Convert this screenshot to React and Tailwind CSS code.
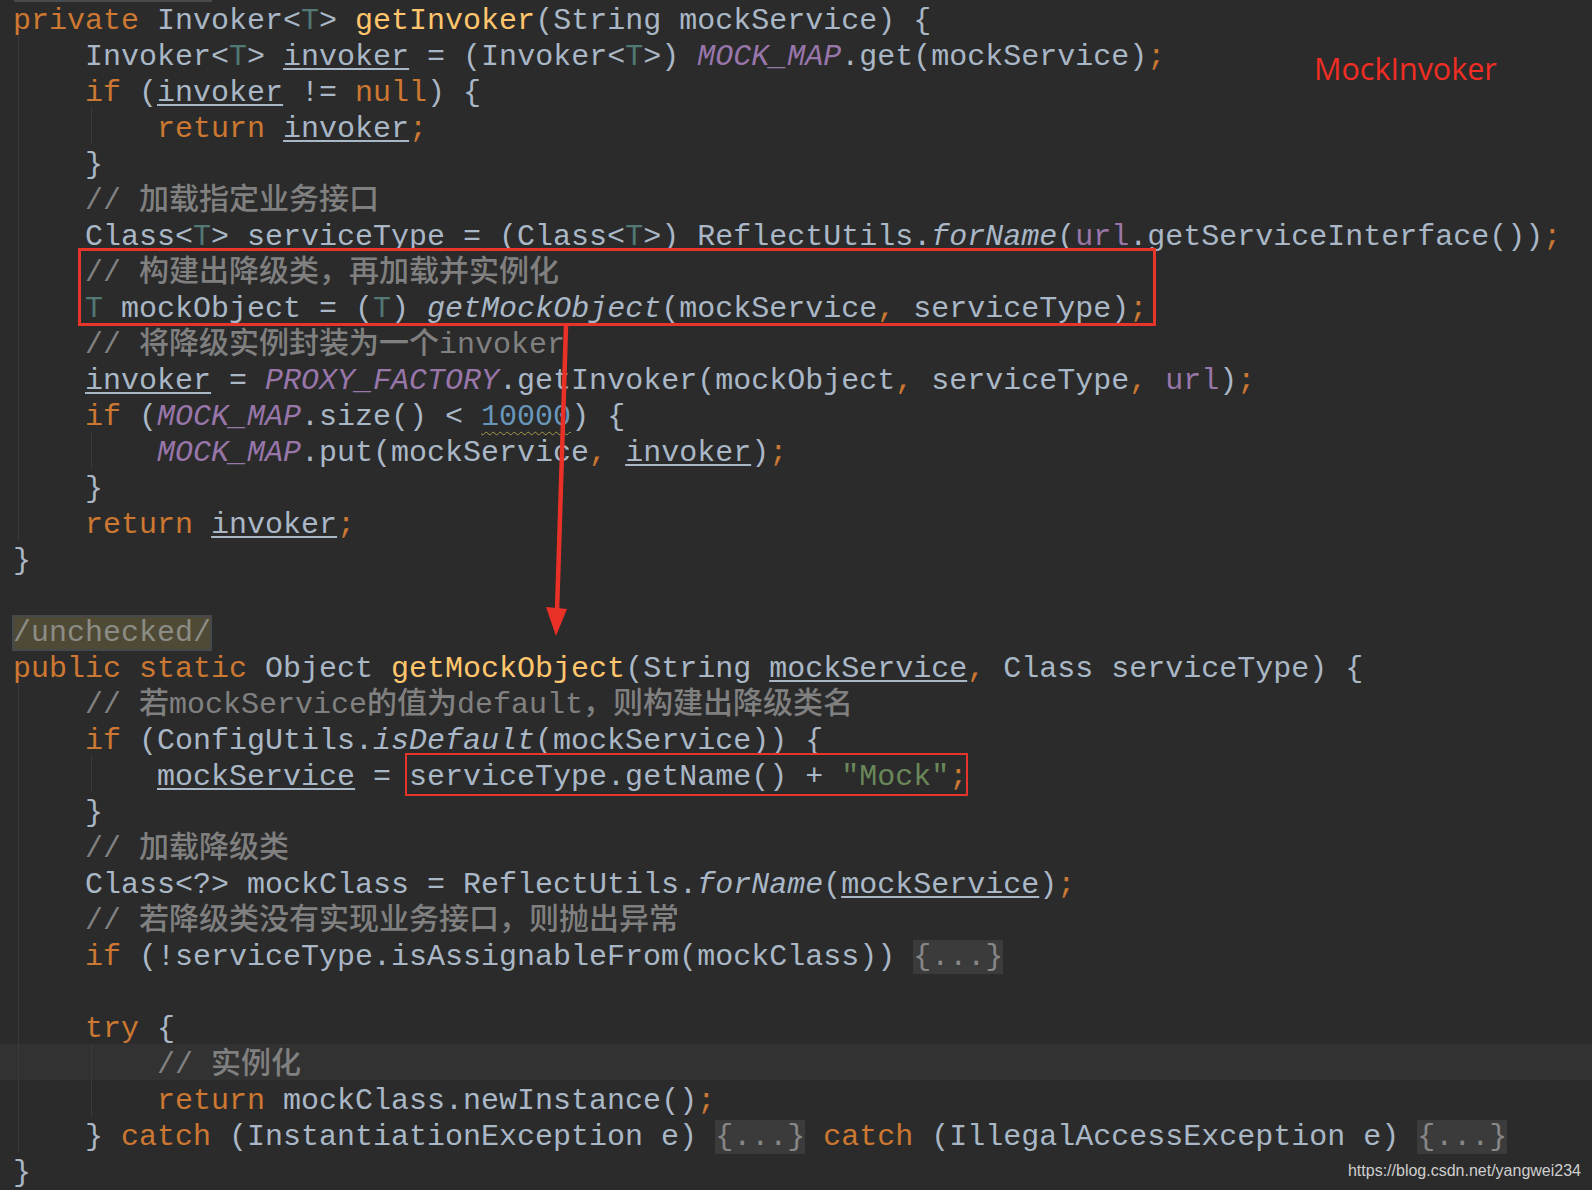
import React from "react";

const K = "text-[#cc7832]";
const D = "text-[#a9b7c6]";
const M = "text-[#ffc66d]";
const C = "text-[#808080]";
const T = "text-[#507874]";
const P = "text-[#9876aa]";
const PI = "text-[#9876aa] italic";
const DI = "text-[#a9b7c6] italic";
const N = "text-[#6897bb] underline decoration-wavy decoration-[#a89d4a] decoration-1 underline-offset-[6px]";
const S = "text-[#6a8759]";
const U = "text-[#a9b7c6] underline decoration-[#a9b7c6] decoration-2 underline-offset-[3px]";
const FOLD = "bg-[#3b3b3b] text-[#878787]";
const CJK = "text-[#808080] font-['Noto_Sans_CJK_SC',sans-serif] font-medium leading-[20px]";

const lines = [
  { g: [], s: [["private", K], [" Invoker<", D], ["T", T], ["> ", D], ["getInvoker", M], ["(String mockService) {", D]] },
  { g: [0], s: [["    Invoker<", D], ["T", T], ["> ", D], ["invoker", U], [" = (Invoker<", D], ["T", T], [">) ", D], ["MOCK_MAP", PI], [".get(mockService)", D], [";", K]] },
  { g: [0], s: [["    ", D], ["if", K], [" (", D], ["invoker", U], [" != ", D], ["null", K], [") {", D]] },
  { g: [0, 1], s: [["        ", D], ["return", K], [" ", D], ["invoker", U], [";", K]] },
  { g: [0], s: [["    }", D]] },
  { g: [0], s: [["    // ", C], ["加载指定业务接口", CJK]] },
  { g: [0], s: [["    Class<", D], ["T", T], ["> serviceType = (Class<", D], ["T", T], [">) ReflectUtils.", D], ["forName", DI], ["(", D], ["url", P], [".getServiceInterface())", D], [";", K]] },
  { g: [0], s: [["    // ", C], ["构建出降级类，再加载并实例化", CJK]] },
  { g: [0], s: [["    ", D], ["T", T], [" mockObject = (", D], ["T", T], [") ", D], ["getMockObject", DI], ["(mockService", D], [",", K], [" serviceType)", D], [";", K]] },
  { g: [0], s: [["    // ", C], ["将降级实例封装为一个", CJK], ["invoker", C]] },
  { g: [0], s: [["    ", D], ["invoker", U], [" = ", D], ["PROXY_FACTORY", PI], [".getInvoker(mockObject", D], [",", K], [" serviceType", D], [",", K], [" ", D], ["url", P], [")", D], [";", K]] },
  { g: [0], s: [["    ", D], ["if", K], [" (", D], ["MOCK_MAP", PI], [".size() < ", D], ["10000", N], [") {", D]] },
  { g: [0, 1], s: [["        ", D], ["MOCK_MAP", PI], [".put(mockService", D], [",", K], [" ", D], ["invoker", U], [")", D], [";", K]] },
  { g: [0], s: [["    }", D]] },
  { g: [0], s: [["    ", D], ["return", K], [" ", D], ["invoker", U], [";", K]] },
  { g: [], s: [["}", D]] },
  { g: [], s: [] },
  { g: [], s: [["/unchecked/", "UNCHECKED"]] },
  { g: [], s: [["public static", K], [" Object ", D], ["getMockObject", M], ["(String ", D], ["mockService", U], [",", K], [" Class serviceType) {", D]] },
  { g: [0], s: [["    // ", C], ["若", CJK], ["mockService", C], ["的值为", CJK], ["default", C], ["，则构建出降级类名", CJK]] },
  { g: [0], s: [["    ", D], ["if", K], [" (ConfigUtils.", D], ["isDefault", DI], ["(mockService)) {", D]] },
  { g: [0, 1], s: [["        ", D], ["mockService", U], [" = serviceType.getName() + ", D], ["\"Mock\"", S], [";", K]] },
  { g: [0], s: [["    }", D]] },
  { g: [0], s: [["    // ", C], ["加载降级类", CJK]] },
  { g: [0], s: [["    Class<?> mockClass = ReflectUtils.", D], ["forName", DI], ["(", D], ["mockService", U], [")", D], [";", K]] },
  { g: [0], s: [["    // ", C], ["若降级类没有实现业务接口，则抛出异常", CJK]] },
  { g: [0], s: [["    ", D], ["if", K], [" (!serviceType.isAssignableFrom(mockClass)) ", D], ["{...}", FOLD]] },
  { g: [0], s: [] },
  { g: [0], s: [["    ", D], ["try", K], [" {", D]] },
  { g: [0, 1], hl: true, s: [["        // ", C], ["实例化", CJK]] },
  { g: [0, 1], s: [["        ", D], ["return", K], [" mockClass.newInstance()", D], [";", K]] },
  { g: [0], s: [["    } ", D], ["catch", K], [" (InstantiationException e) ", D], ["{...}", FOLD], [" ", D], ["catch", K], [" (IllegalAccessException e) ", D], ["{...}", FOLD]] },
  { g: [], s: [["}", D]] },
];

function Line({ line }) {
  return (
    <div className={"relative h-[36px] whitespace-pre pl-[13px] " + (line.hl ? "bg-[#323232]" : "")}>
      {line.g.includes(0) && <span className="absolute top-0 bottom-0 left-[18px] w-px bg-[#3a3a3a]" />}
      {line.g.includes(1) && <span className="absolute top-0 bottom-0 left-[91px] w-px bg-[#3a3a3a]" />}
      <span className="relative top-[3px]">
        {line.s.map(([t, c], i) =>
          c === "UNCHECKED" ? (
            <span key={i} className="bg-[#4f4a35] text-[#8c8c86] outline-2 outline-[#46494c] -outline-offset-1">
              {t}
            </span>
          ) : (
            <span key={i} className={c}>
              {t}
            </span>
          )
        )}
      </span>
    </div>
  );
}

export default function App() {
  return (
    <div className="relative w-[1592px] h-[1190px] overflow-hidden bg-[#2b2b2b] font-['Liberation_Mono',monospace] text-[30px] leading-[36px]">
      <div className="absolute left-[14px] top-0 w-[198px] h-[2px] bg-[#484b4e]" />
      <div className="flex flex-col">
        {lines.map((l, i) => (
          <Line key={i} line={l} />
        ))}
      </div>

      {/* annotation boxes */}
      <div className="absolute left-[78px] top-[248px] w-[1078px] h-[78px] border-[3px] border-[#e8352c]" />
      <div className="absolute left-[405px] top-[753px] w-[563px] h-[43px] border-[2.5px] border-[#e8352c]" />

      <svg className="absolute left-0 top-0 pointer-events-none" width="1592" height="1190">
        <line x1="566" y1="326" x2="557" y2="612" stroke="#ea3128" strokeWidth="4.5" />
        <polygon points="546,607 567,609 556,636" fill="#ea3128" />
      </svg>

      <div className="absolute left-[1314px] top-[53px] font-['Open_Sans',sans-serif] text-[30.5px] leading-[30px] text-[#f02e24]">
        MockInvoker
      </div>

      <div className="absolute right-[11px] top-[1163px] font-['Liberation_Sans',sans-serif] text-[16px] leading-[16px] text-[#cfcfcf]">
        https://blog.csdn.net/yangwei234
      </div>
    </div>
  );
}
